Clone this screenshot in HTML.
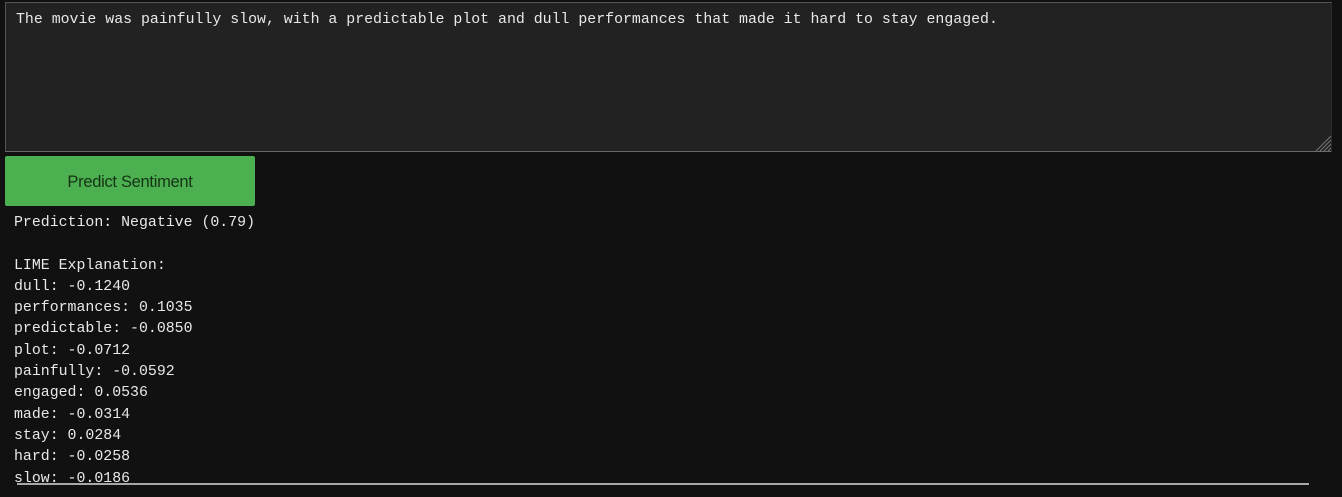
<!DOCTYPE html>
<html><head><style>
html,body{margin:0;padding:0;background:#111;width:1342px;height:497px;overflow:hidden}
.ta{position:absolute;left:5px;top:2px;width:1325px;height:148px;background:#222;border-top:1px solid #555;border-left:1px solid #555;border-bottom:1px solid #6a6a6a;border-right:1px solid #2a2a2a;}
.mono{font-family:"Liberation Mono",monospace;font-size:14.88px;color:#e8e8e8;}
.ta .mono{position:absolute;left:10px;top:9px;white-space:pre}
.grip{position:absolute;right:0;bottom:0}
.btn{position:absolute;left:5px;top:156px;width:250px;height:50px;background:#4caf50;border-radius:2px;font-family:"Liberation Sans",sans-serif;font-size:16.5px;color:#163416;text-align:center;line-height:52px;letter-spacing:-0.3px}
.out{position:absolute;left:14px;top:213px;white-space:pre;line-height:21.3px;height:271px;overflow:hidden}
.bar{position:absolute;left:17px;top:483px;width:1292px;height:2px;background:#a8a8a8}
</style></head><body>
<div class="ta"><div class="mono">The movie was painfully slow, with a predictable plot and dull performances that made it hard to stay engaged.</div>
<svg class="grip" width="16" height="16" viewBox="0 0 16 16"><g stroke="#777" stroke-width="1"><line x1="16" y1="1" x2="1" y2="16"/><line x1="16" y1="5" x2="5" y2="16"/><line x1="16" y1="9" x2="9" y2="16"/><line x1="16" y1="13" x2="13" y2="16"/></g></svg></div>
<div class="btn">Predict Sentiment</div>
<div class="out mono">Prediction: Negative (0.79)

LIME Explanation:
dull: -0.1240
performances: 0.1035
predictable: -0.0850
plot: -0.0712
painfully: -0.0592
engaged: 0.0536
made: -0.0314
stay: 0.0284
hard: -0.0258
slow: -0.0186</div>
<div class="bar"></div>
</body></html>
